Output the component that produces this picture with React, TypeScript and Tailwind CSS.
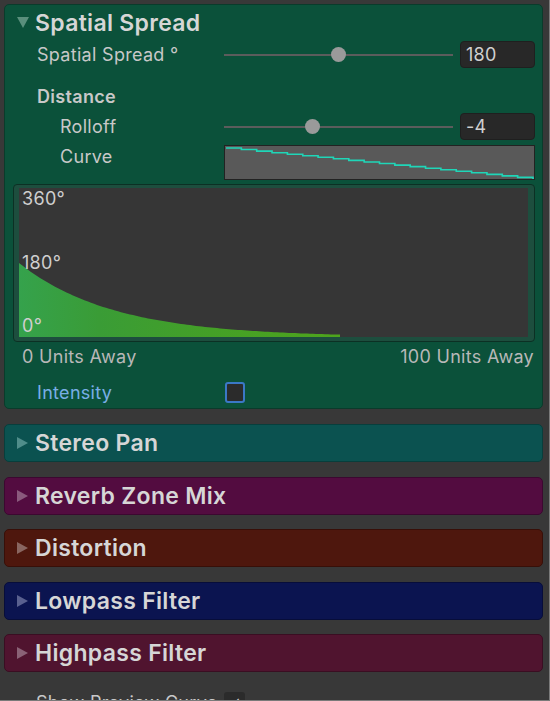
import React from "react";

const font = { fontFamily: "Inter, 'Noto Sans', sans-serif" };

// spread falloff curve, plot is 509 x 149
function spreadPath() {
  const w = 321;
  let d = "M0 149 L0 75";
  for (let x = 0; x <= w; x += 3) {
    const h = Math.max(1.5, 74 * Math.exp(-0.0107 * x));
    d += ` L${x} ${(149 - h).toFixed(1)}`;
  }
  d += ` L${w} 149 Z`;
  return d;
}

function curveSteps() {
  let d = "M1 2";
  for (let i = 0; i <= 20; i++) {
    const x = 1 + i * 15.3;
    const y = 2 + i * 1.55;
    d += ` L${x.toFixed(1)} ${y.toFixed(1)} L${(x + 15.3).toFixed(1)} ${y.toFixed(1)}`;
  }
  return d;
}

function Slider({ value, text }: { value: number; text: string }) {
  return (
    <div className="flex items-center flex-1 h-full">
      <div className="relative flex-1 h-full flex items-center">
        <div className="w-full h-[2px] bg-[#5c5c5c]" />
        <div
          className="absolute top-1/2 w-[15px] h-[15px] -mt-[7.5px] -ml-[7.5px] rounded-full bg-[#9a9a9a]"
          style={{ left: `${value * 100}%` }}
        />
      </div>
      <div className="ml-[7px] w-[75px] h-[27px] rounded-[4px] bg-[#282828] border border-[#1f1f1f] flex items-center pl-[5px] text-[18px] tracking-[0.3px] text-[#d0d0d0]">
        {text}
      </div>
    </div>
  );
}

function Section({ title, bg, border, tri }: { title: string; bg: string; border: string; tri: string }) {
  return (
    <div className={`h-[38px] rounded-[5px] border flex items-center ${bg} ${border}`}>
      <svg width="11" height="12" viewBox="0 0 11 12" className={`ml-[12px] ${tri}`}>
        <polygon points="0,0 11,6 0,12" fill="currentColor" />
      </svg>
      <span className="ml-[7px] mt-[1px] text-[23px] tracking-[0.3px] font-semibold text-[#d6d6d6] leading-none">{title}</span>
    </div>
  );
}

export default function App() {
  return (
    <div className="w-[550px] h-[701px] overflow-hidden bg-[#383838] border-r border-b border-[#7a7a7a]" style={font}>
      <div className="pt-[4px] pl-[4px] pr-[6px]">
        {/* Spatial Spread panel */}
        <div className="rounded-[5px] border border-[#0a3b2b] bg-[#0b513a] h-[405px] flex flex-col">
          <div className="h-[35px] flex items-center">
            <svg width="12" height="11" viewBox="0 0 12 11" className="ml-[12px] text-[#5a8f7c]">
              <polygon points="0,0 12,0 6,11" fill="currentColor" />
            </svg>
            <span className="ml-[6px] mt-[2px] text-[23px] tracking-[0.3px] font-semibold text-[#d6d6d6] leading-none">Spatial Spread</span>
          </div>

          <div className="mt-[1px] h-[27px] flex items-center pl-[32px] pr-[7px] text-[18px] tracking-[0.3px] text-[#c8c8c8]">
            <span className="w-[187px]">Spatial Spread °</span>
            <Slider value={0.5} text="180" />
          </div>

          <div className="mt-[15px] h-[27px] flex items-center pl-[32px]">
            <span className="text-[18px] tracking-[0.3px] font-semibold text-[#c8c8c8]">Distance</span>
          </div>

          <div className="mt-[3px] h-[27px] flex items-center pl-[55px] pr-[7px] text-[18px] tracking-[0.3px] text-[#c8c8c8]">
            <span className="w-[164px]">Rolloff</span>
            <Slider value={0.385} text="-4" />
          </div>

          <div className="mt-[5px] h-[35px] flex items-start pl-[55px] pr-[7px]">
            <span className="w-[164px] h-[22px] mt-[1px] leading-[22px] text-[18px] tracking-[0.3px] text-[#c8c8c8]">Curve</span>
            <div className="flex-1 h-full bg-[#595959] border border-[#222]">
              <svg width="100%" height="100%" viewBox="0 0 308 33" preserveAspectRatio="none">
                <path d={curveSteps()} stroke="#1fd6b8" strokeWidth="1.6" fill="none" />
              </svg>
            </div>
          </div>

          {/* spread graph */}
          <div className="mt-[4px] ml-[8px] mr-[7px] h-[158px] rounded-[4px] border border-[#0c3024] bg-[#1d4e3e] pl-[5px] pr-[6px] pt-[3px] pb-[4px]">
            <div className="relative w-full h-full bg-[#363636]">
              <svg width="100%" height="100%" viewBox="0 0 509 149" preserveAspectRatio="none" className="absolute inset-0">
                <defs>
                  <linearGradient id="sg" x1="0" x2="1" y1="0" y2="0">
                    <stop offset="0" stopColor="#35a24c" />
                    <stop offset="0.25" stopColor="#3a9c36" />
                    <stop offset="0.6" stopColor="#44a027" />
                    <stop offset="1" stopColor="#4ea41c" />
                  </linearGradient>
                </defs>
                <path d={spreadPath()} fill="url(#sg)" />
              </svg>
              <div className="absolute inset-0 flex flex-col justify-between pl-[3px] pt-[1px] pb-[1px] text-[18px] tracking-[0.3px] text-[#cfcfcf] leading-[20px]">
                <span>360°</span>
                <span>180°</span>
                <span>0°</span>
              </div>
            </div>
          </div>

          <div className="mt-[2px] h-[24px] flex items-center justify-between pl-[17px] pr-[8px] text-[18px] tracking-[0.3px] text-[#b8b8b8]">
            <span>0 Units Away</span>
            <span>100 Units Away</span>
          </div>

          <div className="mt-[14px] h-[21px] flex items-center pl-[32px]">
            <span className="w-[188px] text-[18px] tracking-[0.3px] text-[#79aee6]">Intensity</span>
            <div className="w-[20px] h-[21px] rounded-[3px] border-2 border-[#3b78c6] bg-[#2b2b2b]" />
          </div>
        </div>

        <div className="mt-[15px] flex flex-col gap-[14.5px]">
          <Section title="Stereo Pan" bg="bg-[#0b5250]" border="border-[#083e3c]" tri="text-[#4f8d8a]" />
          <Section title="Reverb Zone Mix" bg="bg-[#530c40]" border="border-[#3c0830]" tri="text-[#8a5a7d]" />
          <Section title="Distortion" bg="bg-[#4e170d]" border="border-[#380f08]" tri="text-[#896660]" />
          <Section title="Lowpass Filter" bg="bg-[#0b1450]" border="border-[#070d3a]" tri="text-[#59608f]" />
          <Section title="Highpass Filter" bg="bg-[#50142f]" border="border-[#3a0e22]" tri="text-[#8a6276]" />
        </div>

        <div className="mt-[19px] h-[22px] flex items-center pl-[32px]">
          <span className="w-[188px] text-[18px] tracking-[0.3px] text-[#c8c8c8]">Show Preview Curve</span>
          <div className="w-[21px] h-[21px] rounded-[3px] bg-[#2b2b2b] flex items-center justify-center text-[#d0d0d0] text-[13px]">✓</div>
        </div>
      </div>
    </div>
  );
}
